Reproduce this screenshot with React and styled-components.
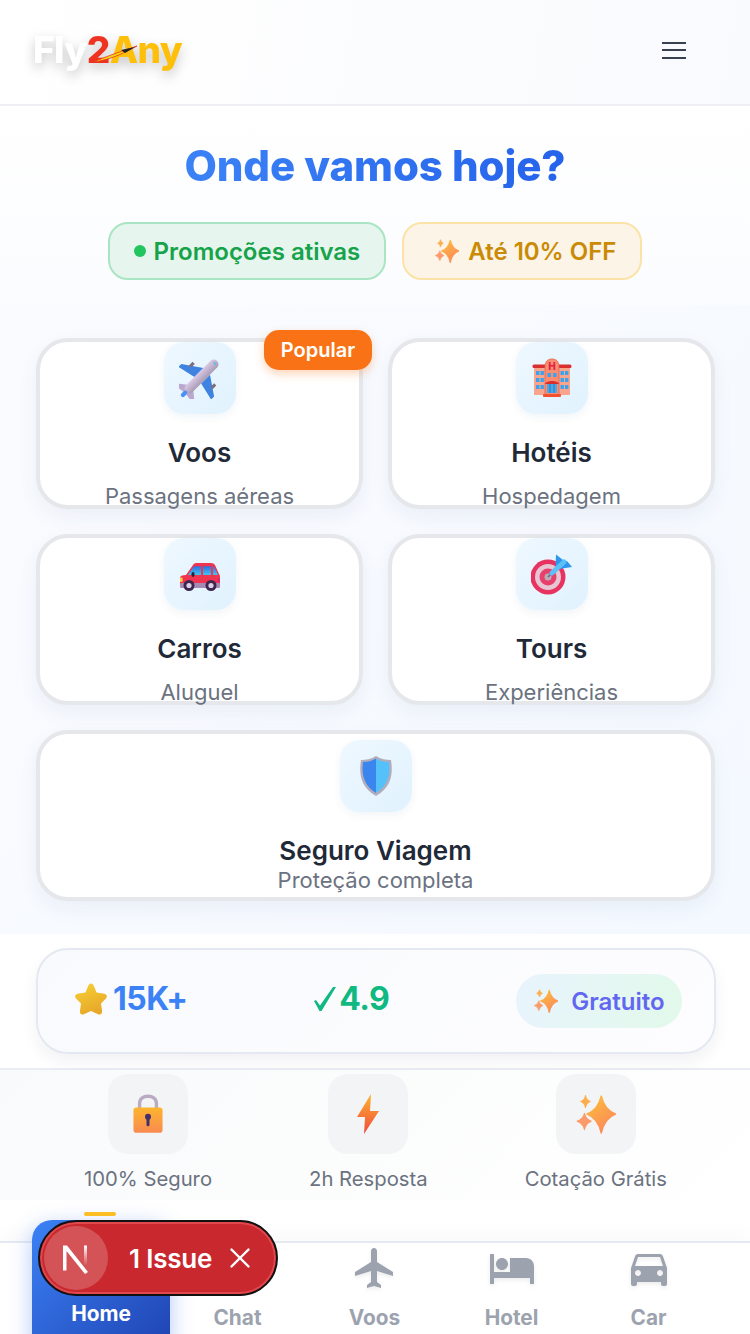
import React from "react";
import styled, { createGlobalStyle } from "styled-components";
import { MdFlight, MdHotel, MdDirectionsCar, MdChatBubble, MdHome } from "react-icons/md";
import { X } from "lucide-react";

const GlobalStyle = createGlobalStyle`
  * { box-sizing: border-box; }
  html, body { margin: 0; padding: 0; background: #fff; }
  body { font-family: Inter, "Liberation Sans", sans-serif; }
`;

const Page = styled.div`
  position: relative;
  width: 750px;
  height: 1334px;
  overflow: hidden;
  display: flex;
  flex-direction: column;
  background: #fff;
`;

const Header = styled.header`
  height: 106px;
  flex: none;
  display: flex;
  align-items: center;
  justify-content: space-between;
  padding: 0 64px 4px 33px;
  border-bottom: 2px solid #eff0f5;
  background: linear-gradient(100deg, #ffffff, #f9fafd);
`;

const Logo = styled.div`
  position: relative;
  font-family: Inter, sans-serif;
  font-weight: 800;
  font-size: 37px;
  line-height: 44px;
  letter-spacing: -0.6px;
  filter: drop-shadow(0 5px 6px rgba(0, 0, 0, 0.22));
`;

const LogoPart = styled.span`
  color: ${({ $color }) => $color};
`;

const LogoPlane = styled.svg`
  position: absolute;
  left: 56px;
  top: 13px;
`;

const Burger = styled.div`
  width: 24px;
  display: flex;
  flex-direction: column;
  gap: 5.5px;

  span {
    display: block;
    height: 2px;
    background: #374151;
  }
`;

const Hero = styled.section`
  flex: none;
  height: 199px;
  padding-top: 38px;
  display: flex;
  flex-direction: column;
  align-items: center;
  background: linear-gradient(180deg, #fff, #fbfcff);
`;

const Title = styled.h1`
  margin: 0 0 34px;
  font-size: 42px;
  line-height: 44px;
  font-weight: 800;
  letter-spacing: -0.1px;
  background: linear-gradient(90deg, #3b82f6, #2563eb);
  -webkit-background-clip: text;
  background-clip: text;
  color: transparent;
`;

const Pills = styled.div`
  display: flex;
  gap: 16px;
`;

const Pill = styled.div`
  height: 58px;
  display: flex;
  align-items: center;
  gap: 8px;
  padding: 0 24px 0 ${({ $left }) => $left}px;
  border-radius: 20px;
  border: 2px solid ${({ $line }) => $line};
  background: ${({ $bg }) => $bg};
  color: ${({ $color }) => $color};
  font-size: 24px;
  font-weight: 600;
`;

const Dot = styled.span`
  width: 12px;
  height: 12px;
  border-radius: 50%;
  background: #22c55e;
`;

const Services = styled.section`
  flex: none;
  padding: 33px 35px 33px 36px;
  display: grid;
  grid-template-columns: 327px 327px;
  gap: 25px;
  background: linear-gradient(135deg, #fafbff, #f4f9ff);
`;

const Card = styled.div`
  position: relative;
  height: 171px;
  grid-column: ${({ $wide }) => ($wide ? "1 / 3" : "auto")};
  padding-top: ${({ $wide }) => ($wide ? 6 : 0)}px;
  display: flex;
  flex-direction: column;
  align-items: center;
  background: #fff;
  border: 4px solid #e5e7eb;
  border-radius: 32px;
  box-shadow: 0 8px 20px rgba(30, 64, 120, 0.06);
`;

const IconTile = styled.div`
  width: 72px;
  height: 72px;
  flex: none;
  display: flex;
  align-items: center;
  justify-content: center;
  border-radius: 20px;
  background: linear-gradient(135deg, #eff8ff, #e0f2fe);
  box-shadow: 0 3px 8px rgba(30, 64, 120, 0.06);
`;

const CardTitle = styled.div`
  margin-top: 23px;
  font-size: 26px;
  line-height: 32px;
  font-weight: 600;
  color: #1f2937;
`;

const CardSub = styled.div`
  margin-top: ${({ $wide }) => ($wide ? -1 : 13)}px;
  font-size: 22px;
  line-height: 28px;
  color: #6b7280;
`;

const Badge = styled.div`
  position: absolute;
  top: -12px;
  right: -13px;
  width: 108px;
  height: 40px;
  display: flex;
  align-items: center;
  justify-content: center;
  border-radius: 15px;
  background: #f97316;
  color: #fff;
  font-size: 20px;
  font-weight: 600;
  box-shadow: 0 4px 10px rgba(249, 115, 22, 0.3);
`;

const StatsWrap = styled.section`
  flex: none;
  padding: 14px 34px 14px 36px;
  border-bottom: 2px solid #e9ecf2;
  height: 136px;
`;

const Stats = styled.div`
  height: 106px;
  display: flex;
  align-items: center;
  justify-content: space-between;
  padding: 0 32px 0 36px;
  border: 2px solid #e4e8f1;
  border-radius: 32px;
  background: linear-gradient(135deg, #f9fafd, #fdfdff);
  box-shadow: 0 8px 16px rgba(30, 40, 80, 0.06);
`;

const Stat = styled.div`
  display: flex;
  align-items: center;
  gap: ${({ $gap }) => $gap}px;
  margin-bottom: 4px;
  font-size: 32px;
  line-height: 40px;
  font-weight: 700;
  letter-spacing: -0.5px;
  color: ${({ $color }) => $color};
`;

const FreeTag = styled.div`
  height: 54px;
  width: 166px;
  display: flex;
  align-items: center;
  justify-content: center;
  gap: 12px;
  border-radius: 27px;
  background: linear-gradient(100deg, #e8f4fd, #e2f9ea);
  color: #6366f1;
  font-size: 24px;
  font-weight: 600;
`;

const Trust = styled.section`
  flex: none;
  height: 130px;
  padding: 4px 0 0 1px;
  display: flex;
  justify-content: center;
  gap: 97px;
  background: linear-gradient(135deg, #f9fafb, #ffffff);
`;

const TrustItem = styled.div`
  display: flex;
  flex-direction: column;
  align-items: center;
`;

const TrustIcon = styled.div`
  width: 80px;
  height: 80px;
  display: flex;
  align-items: center;
  justify-content: center;
  border-radius: 20px;
  background: #f3f4f6;
`;

const TrustLabel = styled.div`
  margin-top: 12px;
  font-size: 20.25px;
  line-height: 26px;
  color: #6b7280;
`;

const Nav = styled.nav`
  position: relative;
  margin-top: auto;
  height: 93px;
  flex: none;
  padding: 0 33px 0 32px;
  display: grid;
  grid-template-columns: repeat(5, 137px);
  border-top: 2px solid #e6e9f2;
  background: #fff;
  box-shadow: 0 -8px 20px rgba(0, 0, 0, 0.025);
`;

const NavItem = styled.div`
  display: flex;
  flex-direction: column;
  align-items: center;
  padding-top: 1px;
  color: #9ca3af;
  font-size: 20.8px;
  font-weight: 700;
  line-height: 26px;

  svg {
    display: block;
    margin-bottom: 13px;
    filter: drop-shadow(0 2px 2px rgba(0, 0, 0, 0.08));
  }
`;

const HomeItem = styled(NavItem)`
  position: relative;
  margin-top: -23px;
  margin-right: -1px;
  height: 140px;
  padding-top: 22px;
  color: #fff;
  border-radius: 20px;
  background: linear-gradient(135deg, #3b82f6, #1e40af);
  box-shadow: 0 6px 22px rgba(37, 99, 235, 0.35);

  svg {
    margin-bottom: 11px;
  }

  &::before {
    content: "";
    position: absolute;
    top: -8px;
    left: 52px;
    width: 32px;
    height: 4px;
    border-radius: 2px;
    background: #fbbf24;
  }
`;

const IssueToast = styled.div`
  position: absolute;
  left: 38px;
  top: 1220px;
  width: 240px;
  height: 76px;
  display: flex;
  align-items: center;
  padding-left: 4px;
  border-radius: 38px;
  border: 2px solid #111;
  background: #c9282e;
  box-shadow: inset 0 0 0 2px #e0484e;
  color: #fff;
`;

const IssueLogo = styled.div`
  width: 64px;
  height: 64px;
  flex: none;
  display: flex;
  align-items: center;
  justify-content: center;
  border-radius: 50%;
  background: rgba(255, 255, 255, 0.2);
`;

const IssueText = styled.span`
  margin-left: 21px;
  font-size: 26px;
  font-weight: 600;
  letter-spacing: -0.2px;
`;

const IssueClose = styled.span`
  display: flex;
  margin-left: 11px;
`;

const PlaneEmoji = () => (
  <svg width="42" height="42" viewBox="0 0 40 40">
    <defs>
      <linearGradient id="planeBody" x1="0" y1="0" x2="1" y2="0">
        <stop offset="0" stopColor="#d9c9e6" />
        <stop offset="1" stopColor="#a99bb4" />
      </linearGradient>
    </defs>
    <g transform="rotate(45 20 20)">
      <path d="M15.5 11 L-2 23 V27 L15.5 23Z M24.5 11 L42 23 V27 L24.5 23Z" fill="#3f83e0" />
      <rect x="4" y="14" width="3" height="5" fill="#7d6f7c" />
      <rect x="33" y="14" width="3" height="5" fill="#7d6f7c" />
      <path d="M16 33 L8 39.5 V42 L20 40 L32 42 V39.5 L24 33Z" fill="#bba8cf" />
      <rect x="15.5" y="-3" width="9" height="42" rx="4.5" fill="url(#planeBody)" />
      <rect x="18" y="38" width="4" height="7" rx="2" fill="#4a90f5" />
      <rect x="18.5" y="-0.5" width="3" height="1.4" fill="#3ec5e8" />
    </g>
  </svg>
);

const HotelEmoji = () => (
  <svg width="40" height="40" viewBox="0 0 40 40">
    <rect x="2" y="7" width="36" height="30" fill="#f9a58e" />
    <rect x="0.5" y="6.5" width="39" height="3.5" rx="1.5" fill="#d92f2f" />
    <path d="M13 37 V9 C13 3 16 1 20 1 C24 1 27 3 27 9 V37Z" fill="#fb8d72" stroke="#e0654c" strokeWidth="0.8" />
    <text x="20" y="12" textAnchor="middle" fontSize="10" fontWeight="800" fontFamily="Inter" fill="#e0253f">H</text>
    {[4, 8.5, 28.5, 33].map((x) =>
      [13, 20, 27].map((y) => <rect key={`${x}-${y}`} x={x} y={y} width="3.4" height="4" fill="#38a3ee" />)
    )}
    <rect x="15.5" y="15" width="3.4" height="4" fill="#38a3ee" />
    <rect x="21.2" y="15" width="3.4" height="4" fill="#38a3ee" />
    <rect x="15" y="26" width="10" height="9" fill="#4aa8e8" />
    <path d="M18 26 V35 M22 26 V35" stroke="#1f6fb0" strokeWidth="0.8" />
    <path d="M13 26 C14 22 26 22 27 26Z" fill="#d92f2f" />
    <rect x="11" y="36" width="18" height="3" rx="1" fill="#f0512f" />
  </svg>
);

const CarEmoji = () => (
  <svg width="40" height="34" viewBox="0 -6 40 34">
    <defs>
      <linearGradient id="carGlass" x1="0" y1="0" x2="0" y2="1">
        <stop offset="0" stopColor="#2f6fe0" />
        <stop offset="1" stopColor="#3fc5f0" />
      </linearGradient>
    </defs>
    <path
      d="M0 15 C0 13 2 12 6 12 L13 2 C14 .6 15 0 17 0 H31 C33 0 34 .8 35 2 L39 11 C40 12 40 13 40 15 V22 H0Z"
      fill="#f0344f"
    />
    <path d="M8 12 L14 3.2 H21 V12Z M23 3.2 H31 V12 H23Z M33 3.2 H34 L38 12 H33Z" fill="url(#carGlass)" />
    <ellipse cx="13" cy="11.5" rx="1.6" ry="2.4" fill="#2b2233" />
    <rect x="0" y="14.5" width="2.6" height="4.5" rx="1" fill="#f7d13c" />
    <rect x="37.5" y="15.5" width="2.5" height="3.5" rx="1" fill="#d6247f" />
    <rect x="0" y="20" width="40" height="5" rx="1" fill="#a78bb5" />
    <circle cx="9" cy="22.5" r="5.5" fill="#3f2650" />
    <circle cx="9" cy="22.5" r="2.6" fill="#dcd0e4" />
    <circle cx="31" cy="22.5" r="5.5" fill="#3f2650" />
    <circle cx="31" cy="22.5" r="2.6" fill="#dcd0e4" />
  </svg>
);

const TargetEmoji = () => (
  <svg width="42" height="42" viewBox="0 0 42 42">
    <circle cx="17" cy="24" r="17.5" fill="#e8325f" />
    <circle cx="17" cy="24" r="13" fill="#e6c6d2" />
    <circle cx="17" cy="24" r="8.5" fill="#e8406c" />
    <circle cx="17" cy="24" r="3.5" fill="#bdaab6" />
    <path d="M17 24 L22 19" stroke="#5a6a83" strokeWidth="1.4" />
    <path d="M24.5 14 L25 1.5 L32 7 L31 14Z" fill="#2f96ee" />
    <path d="M28 16 L41 14 L36 8 L30 8Z" fill="#2f96ee" />
    <path d="M21 20 L33 9" stroke="#5cc0f7" strokeWidth="5" strokeLinecap="round" />
  </svg>
);

const ShieldEmoji = () => (
  <svg width="34" height="42" viewBox="0 0 34 42">
    <path d="M17 1 C22 4 27 5 32 5 C34 18 33 32 17 41 C1 32 0 18 2 5 C7 5 12 4 17 1Z" fill="#b3adbb" />
    <path d="M17 3.5 V38 C4 30 2.5 18 4 7 C9 7 13 6 17 3.5Z" fill="#3b86ee" />
    <path d="M17 3.5 V38 C30 30 31.5 18 30 7 C25 7 21 6 17 3.5Z" fill="#55c1fb" />
  </svg>
);

const StarEmoji = () => (
  <svg width="34" height="34" viewBox="0 0 34 34">
    <defs>
      <linearGradient id="starFill" x1="0" y1="0" x2="0.4" y2="1">
        <stop offset="0" stopColor="#f7d132" />
        <stop offset="1" stopColor="#e8a92a" />
      </linearGradient>
    </defs>
    <path
      d="M17 1.5 C18.5 1.5 19.5 3 20.5 5.5 L22.5 10.5 L29 11.5 C33 12 34 14.5 31.5 17 L27 21.5 L28 28.5 C28.5 32 26.5 33.5 23.5 32 L17 29 L10.5 32 C7.5 33.5 5.5 32 6 28.5 L7 21.5 L2.5 17 C0 14.5 1 12 5 11.5 L11.5 10.5 L13.5 5.5 C14.5 3 15.5 1.5 17 1.5Z"
      fill="url(#starFill)"
    />
  </svg>
);

const LockEmoji = () => (
  <svg width="30" height="40" viewBox="0 0 32 42">
    <defs>
      <linearGradient id="lockFill" x1="0" y1="0" x2="0" y2="1">
        <stop offset="0" stopColor="#fdb52e" />
        <stop offset="1" stopColor="#f98a50" />
      </linearGradient>
    </defs>
    <path d="M7 15 V10 C7 4.5 11 2 16 2 C21 2 25 4.5 25 10 V15" fill="none" stroke="#b9abc2" strokeWidth="3.6" />
    <rect x="0.5" y="14" width="31" height="27" rx="3" fill="url(#lockFill)" />
    <circle cx="16" cy="24" r="3.2" fill="#43306a" />
    <rect x="14.4" y="25" width="3.2" height="9" rx="1.6" fill="#43306a" />
  </svg>
);

const BoltEmoji = () => (
  <svg width="24" height="40" viewBox="0 0 24 40">
    <defs>
      <linearGradient id="boltFill" x1="0" y1="0" x2="0" y2="1">
        <stop offset="0" stopColor="#fdb52e" />
        <stop offset="1" stopColor="#f0483e" />
      </linearGradient>
    </defs>
    <path d="M15 0 L1 23 H9 L8 40 L23 17 H14Z" fill="url(#boltFill)" />
  </svg>
);

const CheckGlyph = () => (
  <svg width="22" height="24" viewBox="0 0 22 24">
    <path d="M0 14 L2 13 L6 18.5 L19 0 H22 L7.5 24 H5.5Z" fill="currentColor" />
  </svg>
);

const Sparkles = ({ size }) => (
  <svg width={size} height={size} viewBox="0 0 40 40">
    <defs>
      <linearGradient id="sparkFill" x1="0" y1="0" x2="0.6" y2="1">
        <stop offset="0" stopColor="#fdc13a" />
        <stop offset="1" stopColor="#fb8a5a" />
      </linearGradient>
    </defs>
    <path
      d="M25 3 Q28 16 38.5 20 Q28 24 25 38 Q22 24 11.5 20 Q22 16 25 3Z"
      fill="url(#sparkFill)"
      stroke="url(#sparkFill)"
      strokeLinejoin="round"
      strokeWidth="1.5"
    />
    <path d="M9 19.5 Q10.2 25 15.5 27 Q10.2 29 9 35 Q7.8 29 2 27 Q7.8 25 9 19.5Z" fill="#fb9a6a" stroke="#fb9a6a" strokeLinejoin="round" />
    <path d="M10 2.5 Q10.8 7 14.5 8.2 Q10.8 9.5 10 14 Q9.2 9.5 5.5 8.2 Q9.2 7 10 2.5Z" fill="#fcae4e" stroke="#fcae4e" strokeLinejoin="round" />
  </svg>
);

const services = [
  { title: "Voos", sub: "Passagens aéreas", icon: <PlaneEmoji />, popular: true },
  { title: "Hotéis", sub: "Hospedagem", icon: <HotelEmoji /> },
  { title: "Carros", sub: "Aluguel", icon: <CarEmoji /> },
  { title: "Tours", sub: "Experiências", icon: <TargetEmoji /> },
  { title: "Seguro Viagem", sub: "Proteção completa", icon: <ShieldEmoji />, wide: true },
];

const trust = [
  { label: "100% Seguro", icon: <LockEmoji /> },
  { label: "2h Resposta", icon: <BoltEmoji /> },
  { label: "Cotação Grátis", icon: <Sparkles size={42} /> },
];

const navItems = [
  { label: "Chat", Icon: MdChatBubble },
  { label: "Voos", Icon: MdFlight },
  { label: "Hotel", Icon: MdHotel },
  { label: "Car", Icon: MdDirectionsCar },
];

export default function App() {
  return (
    <Page>
      <GlobalStyle />
      <Header>
        <Logo>
          <LogoPart $color="#ffffff">Fly</LogoPart>
          <LogoPart $color="#ee3322">2</LogoPart>
          <LogoPart $color="#fdbf0a">Any</LogoPart>
          <LogoPlane width="50" height="24" viewBox="0 0 50 24">
            <path d="M4 21 C16 20 32 14 48 5 C34 10 18 15 4 21Z" fill="#f6d80f" stroke="#e8321c" strokeWidth="0.8" />
            <path d="M32 9 L46 6 L36 12Z" fill="#222" />
          </LogoPlane>
        </Logo>
        <Burger>
          <span />
          <span />
          <span />
        </Burger>
      </Header>

      <Hero>
        <Title>Onde vamos hoje?</Title>
        <Pills>
          <Pill $left={24} $line="#a9e5c3" $bg="#e6f6ee" $color="#16a34a">
            <Dot />
            Promoções ativas
          </Pill>
          <Pill $left={30} $line="#fbe3a8" $bg="#fcf4e6" $color="#ca8a04">
            <Sparkles size={26} />
            Até 10% OFF
          </Pill>
        </Pills>
      </Hero>

      <Services>
        {services.map((item) => (
          <Card key={item.title} $wide={item.wide}>
            {item.popular && <Badge>Popular</Badge>}
            <IconTile>{item.icon}</IconTile>
            <CardTitle>{item.title}</CardTitle>
            <CardSub $wide={item.wide}>{item.sub}</CardSub>
          </Card>
        ))}
      </Services>

      <StatsWrap>
        <Stats>
          <Stat $gap={5} $color="#3b82f6">
            <StarEmoji />
            15K+
          </Stat>
          <Stat $gap={3} $color="#10b981">
            <CheckGlyph />
            4.9
          </Stat>
          <FreeTag>
            <Sparkles size={26} />
            Gratuito
          </FreeTag>
        </Stats>
      </StatsWrap>

      <Trust>
        {trust.map((item) => (
          <TrustItem key={item.label}>
            <TrustIcon>{item.icon}</TrustIcon>
            <TrustLabel>{item.label}</TrustLabel>
          </TrustItem>
        ))}
      </Trust>

      <Nav>
        <HomeItem>
          <MdHome size={48} />
          Home
        </HomeItem>
        {navItems.map(({ label, Icon }) => (
          <NavItem key={label}>
            <Icon size={48} />
            {label}
          </NavItem>
        ))}
      </Nav>

      <IssueToast>
        <IssueLogo>
          <svg width="34" height="34" viewBox="0 0 34 34">
            <defs>
              <linearGradient id="nFade" x1="0" y1="0" x2="0" y2="1">
                <stop offset="0" stopColor="#fff" />
                <stop offset="1" stopColor="#fff" stopOpacity="0" />
              </linearGradient>
            </defs>
            <path d="M4 4.5 H8 L29 31 L26 33 L7.5 10 V29.5 H4Z" fill="#fff" />
            <rect x="25" y="4.5" width="3" height="20" fill="url(#nFade)" />
          </svg>
        </IssueLogo>
        <IssueText>1 Issue</IssueText>
        <IssueClose>
          <X size={34} strokeWidth={1.7} />
        </IssueClose>
      </IssueToast>
    </Page>
  );
}
